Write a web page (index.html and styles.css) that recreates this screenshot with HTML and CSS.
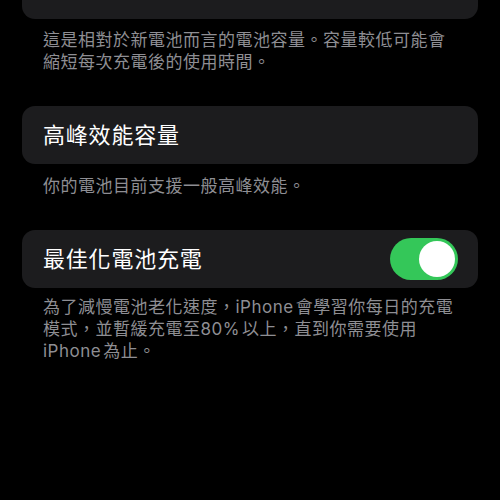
FILE: index.html
```html
<!DOCTYPE html>
<html lang="zh-Hant">
<head>
<meta charset="utf-8">
<link rel="stylesheet" href="styles.css">
</head>
<body>
<div class="page">
  <div class="card card-top">
    <span class="title">最大容量</span>
  </div>
  <p class="caption cap1">這是相對於新電池而言的電池容量。容量較低可能會縮短每次充電後的使用時間。</p>

  <div class="card card-mid">
    <span class="title">高峰效能容量</span>
  </div>
  <p class="caption cap2">你的電池目前支援一般高峰效能。</p>

  <div class="card card-mid">
    <span class="title">最佳化電池充電</span>
    <span class="toggle"><span class="knob"></span></span>
  </div>
  <p class="caption cap3">為了減慢電池老化速度，iPhone&#8202;會學習你每日的充電模式，並暫緩充電至80%&#8202;以上，直到你需要使用iPhone&#8202;為止。</p>
</div>
</body>
</html>
```

FILE: styles.css
```css
html, body {
  margin: 0;
  padding: 0;
  background: #000;
  height: 100%;
  overflow: hidden;
}

.page {
  padding: 0 22px;
  font-family: "Inter", "Noto Sans CJK TC", sans-serif;
}

.card {
  background: #1c1c1e;
  border-radius: 13px;
  height: 58px;
  padding: 0 20px 0 21px;
  display: flex;
  align-items: center;
  justify-content: space-between;
  box-sizing: border-box;
}

.card-top {
  margin-top: -39px;
}

.card-top .title {
  position: relative;
  top: -6px;
}

.card-mid {
  margin-top: 33px;
}

.title {
  color: #fff;
  font-size: 22px;
  letter-spacing: 0.8px;
  line-height: 28px;
}

.caption {
  margin: 0;
  padding: 0 21px;
  color: #8e8e93;
  font-size: 17px;
  letter-spacing: 0.5px;
  line-height: 22px;
}

.cap1 { margin-top: 10px; }
.cap2 { margin-top: 11px; }
.cap3 { margin-top: 8px; }

.toggle {
  width: 68px;
  height: 42px;
  border-radius: 21px;
  background: #34c759;
  display: flex;
  align-items: center;
  justify-content: flex-end;
  padding: 0 3px;
  box-sizing: border-box;
}

.knob {
  width: 36px;
  height: 36px;
  border-radius: 50%;
  background: #fff;
}
```
